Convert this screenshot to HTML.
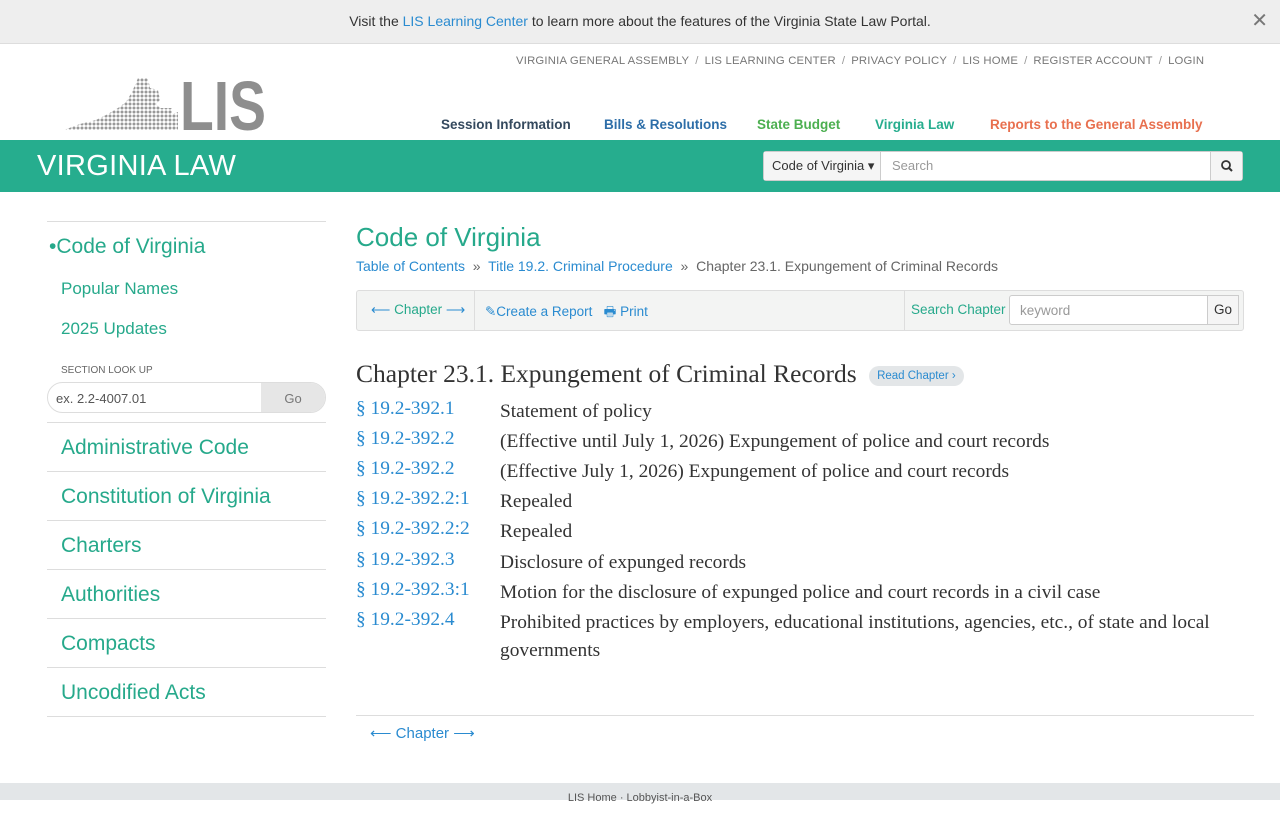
<!DOCTYPE html>
<html><head><meta charset="utf-8"><style>
*{box-sizing:border-box;margin:0;padding:0}
body{width:1280px;height:800px;overflow:hidden;font-family:"Liberation Sans",sans-serif;background:#fff;position:relative;color:#333}
a{text-decoration:none}
.banner{position:absolute;top:0;left:0;width:1280px;height:44px;background:#eee;border-bottom:1px solid #ddd;text-align:center;font-size:14px;line-height:43px;color:#333}
.banner a{color:#2a8bd0}
.banner .x{position:absolute;right:12px;top:0;font-size:20px;color:#777}
.top{position:absolute;top:55px;left:516px;font-size:11.3px;color:#777;letter-spacing:.2px}
.top span{margin:0 6px;color:#999}
.nav{position:absolute;top:117px;font-size:13.5px;font-weight:bold}
.bar{position:absolute;top:140px;left:0;width:1280px;height:52px;background:#26ad8e}
.bar .t{position:absolute;left:37px;top:10px;color:#fff;font-size:29px;letter-spacing:.3px}
.srch{position:absolute;left:763px;top:11px;width:480px;height:30px;background:#fff;border:1px solid #ccc;border-radius:3px;font-size:13px}
.srch .d{position:absolute;left:0;top:0;width:117px;height:28px;background:#f5f5f5;border-right:1px solid #ccc;line-height:28px;padding-left:8px;color:#333}
.srch .p{position:absolute;left:128px;line-height:28px;color:#999}
.srch .b{position:absolute;right:0;top:0;width:32px;height:28px;background:#f5f5f5;border-left:1px solid #ccc}
.side{position:absolute;left:47px;top:221px;width:279px}
.side .l{color:#26a98b}
.hr{border-top:1px solid #ddd}
.big{font-size:21px;color:#26a98b;padding-left:14px;height:49px;line-height:49px;border-bottom:1px solid #ddd}
.main{position:absolute;left:356px}
.blue{color:#2a8bd0}
.row{position:absolute;left:356px;font-family:"Liberation Serif",serif;font-size:19.4px;color:#333}
.row a{color:#2a8bd0;position:absolute;left:0;width:140px}
.row span{position:absolute;left:144px;width:760px;line-height:28px}
</style></head><body>
<div class="banner">Visit the <a>LIS Learning Center</a> to learn more about the features of the Virginia State Law Portal.<span class="x">✕</span></div>
<svg style="position:absolute;left:60px;top:74px" width="210" height="58">
<defs><pattern id="dt" width="4" height="4" patternUnits="userSpaceOnUse"><circle cx="2" cy="2" r="1.5" fill="#999"/></pattern></defs>
<polygon points="4,56 20,50 36,46 48,40 58,34 66,28 72,18 78,4 88,4 90,14 98,16 100,26 96,30 100,34 112,34 112,40 118,38 118,56" fill="url(#dt)"/>
<text x="120" y="56" font-family="Liberation Sans Narrow,Liberation Sans,sans-serif" font-weight="bold" font-size="70" fill="#8e8e8e" textLength="86" lengthAdjust="spacingAndGlyphs">LIS</text>
</svg>
<div class="top">VIRGINIA GENERAL ASSEMBLY<span>/</span>LIS LEARNING CENTER<span>/</span>PRIVACY POLICY<span>/</span>LIS HOME<span>/</span>REGISTER ACCOUNT<span>/</span>LOGIN</div>
<div class="nav" style="left:441px;color:#34495e">Session Information</div>
<div class="nav" style="left:604px;color:#2d6ea8">Bills &amp; Resolutions</div>
<div class="nav" style="left:757px;color:#4caf50">State Budget</div>
<div class="nav" style="left:875px;color:#26ad8e">Virginia Law</div>
<div class="nav" style="left:990px;color:#e8704f">Reports to the General Assembly</div>
<div class="bar"><div class="t">VIRGINIA LAW</div>
<div class="srch"><div class="d">Code of Virginia ▾</div><div class="p">Search</div><div class="b"><svg width="32" height="28"><circle cx="15" cy="13" r="4" fill="none" stroke="#333" stroke-width="1.8"/><line x1="18" y1="16" x2="21" y2="19" stroke="#333" stroke-width="2"/></svg></div></div></div>

<div class="side">
<div class="hr"></div>
<div class="l" style="font-size:21px;margin-top:13px;padding-left:2px">•Code of Virginia</div>
<div class="l" style="font-size:17px;margin-top:20px;padding-left:14px">Popular Names</div>
<div class="l" style="font-size:17px;margin-top:20px;padding-left:14px">2025 Updates</div>
<div style="font-size:10px;color:#666;margin-top:26px;padding-left:14px">SECTION LOOK UP</div>
<div style="position:relative;margin-top:6px;height:31px;border:1px solid #ddd;border-radius:16px;font-size:13px;overflow:hidden"><span style="position:absolute;left:8px;top:8px;color:#555">ex. 2.2-4007.01</span><span style="position:absolute;right:0;top:0;width:64px;height:31px;background:#e6e6e6;text-align:center;line-height:31px;color:#777">Go</span></div>
<div class="hr" style="margin-top:9px"></div>
<div class="big">Administrative Code</div>
<div class="big">Constitution of Virginia</div>
<div class="big">Charters</div>
<div class="big">Authorities</div>
<div class="big">Compacts</div>
<div class="big">Uncodified Acts</div>
</div>

<div class="main" style="top:222px;font-size:26px;color:#26a98b">Code of Virginia</div>
<div class="main" style="top:258px;font-size:14px;color:#666"><span class="blue">Table of Contents</span> &nbsp;»&nbsp; <span class="blue">Title 19.2. Criminal Procedure</span> &nbsp;»&nbsp; Chapter 23.1. Expungement of Criminal Records</div>
<div class="main" style="top:290px;width:888px;height:41px;background:#f3f4f3;border:1px solid #ddd;border-radius:3px;font-size:13.5px">
<span style="position:absolute;left:14px;top:11px;color:#26a98b"><span class="blue">⟵</span> Chapter <span class="blue">⟶</span></span>
<span style="position:absolute;left:117px;top:0;height:39px;border-left:1px solid #ddd"></span>
<span class="blue" style="position:absolute;left:128px;top:11px">✎Create a Report &nbsp; 🖶 Print</span>
<span style="position:absolute;left:547px;top:0;height:39px;border-left:1px solid #ddd"></span>
<span style="position:absolute;left:554px;top:11px;color:#26a98b">Search Chapter</span>
<span style="position:absolute;left:652px;top:4px;width:230px;height:30px;background:#fff;border:1px solid #ccc;border-radius:3px;color:#999;padding:7px 10px">keyword</span>
<span style="position:absolute;left:850px;top:4px;width:32px;height:30px;background:#f5f5f5;border:1px solid #ccc;text-align:center;line-height:28px;color:#333">Go</span>
</div>
<div class="main" style="top:359px;font-family:'Liberation Serif',serif;font-size:25.5px;color:#333">Chapter 23.1. Expungement of Criminal Records <span style="font-family:'Liberation Sans',sans-serif;font-size:11.5px;background:#e3e6e8;color:#2a8bd0;border-radius:10px;padding:4px 8px;vertical-align:middle;margin-left:6px">Read Chapter ›</span></div>
<div class="row" style="top:398px"><a>§ 19.2-392.1</a><span>Statement of policy</span></div>
<div class="row" style="top:428px"><a>§ 19.2-392.2</a><span>(Effective until July 1, 2026) Expungement of police and court records</span></div>
<div class="row" style="top:458px"><a>§ 19.2-392.2</a><span>(Effective July 1, 2026) Expungement of police and court records</span></div>
<div class="row" style="top:488px"><a>§ 19.2-392.2:1</a><span>Repealed</span></div>
<div class="row" style="top:518px"><a>§ 19.2-392.2:2</a><span>Repealed</span></div>
<div class="row" style="top:549px"><a>§ 19.2-392.3</a><span>Disclosure of expunged records</span></div>
<div class="row" style="top:579px"><a>§ 19.2-392.3:1</a><span>Motion for the disclosure of expunged police and court records in a civil case</span></div>
<div class="row" style="top:609px"><a>§ 19.2-392.4</a><span>Prohibited practices by employers, educational institutions, agencies, etc., of state and local governments</span></div>
<div class="main" style="top:715px;width:898px;border-top:1px solid #ddd"></div>
<div class="main" style="top:724px;left:370px;font-size:15px;color:#2a8bd0">⟵ Chapter ⟶</div>
<div style="position:absolute;top:783px;left:0;width:1280px;height:17px;background:#e3e6e8;text-align:center;font-size:11px;color:#555;line-height:30px">LIS Home · Lobbyist-in-a-Box</div>
</body></html>
